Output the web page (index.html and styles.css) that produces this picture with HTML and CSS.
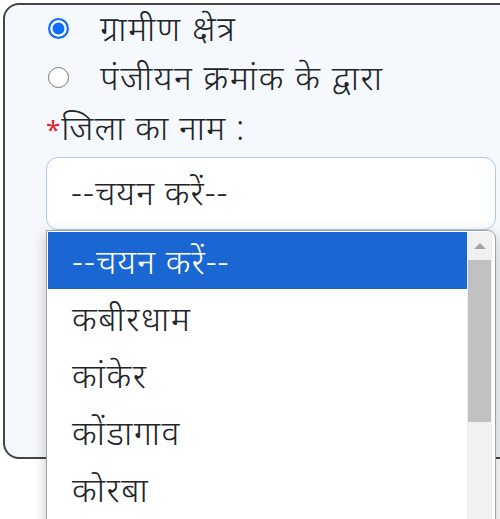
FILE: index.html
```html
<!DOCTYPE html>
<html lang="hi">
<head>
  <meta charset="UTF-8">
  <title>जिला चयन</title>
  <link rel="stylesheet" href="styles.css">
</head>
<body>
  <div class="page">
    <div class="card">
      <label class="radio-row">
        <span class="radio checked"></span>
        <span>ग्रामीण क्षेत्र</span>
      </label>
      <label class="radio-row">
        <span class="radio"></span>
        <span>पंजीयन क्रमांक के द्वारा</span>
      </label>
      <div class="field-label"><span class="req">*</span>जिला का नाम :</div>
      <div class="select-box">--चयन करें--</div>
    </div>

    <div class="dropdown">
      <ul class="options">
        <li class="active">--चयन करें--</li>
        <li>कबीरधाम</li>
        <li>कांकेर</li>
        <li>कोंडागाव</li>
        <li>कोरबा</li>
      </ul>
      <div class="scrollbar">
        <div class="arrow"></div>
        <div class="thumb"></div>
      </div>
    </div>
  </div>
</body>
</html>
```

FILE: styles.css
```css
* {
  box-sizing: border-box;
  margin: 0;
  padding: 0;
}

body {
  background: #fff;
  font-family: "Noto Sans", "Noto Sans Devanagari", sans-serif;
  font-weight: 300;
  color: #212529;
  overflow: hidden;
}

.page {
  position: relative;
  width: 500px;
  height: 519px;
  padding-top: 3px;
  padding-left: 3px;
  overflow: hidden;
}

.card {
  width: 530px;
  height: 456px;
  border: 2px solid #444;
  border-radius: 16px;
  background: #f5f9fe;
  padding-left: 41px;
}

.radio-row,
.field-label,
.select-box,
.options li {
  font-size: 34px;
  letter-spacing: 1.5px;
}

.radio-row {
  display: flex;
  align-items: center;
  gap: 31px;
  height: 48px;
  padding-left: 2px;
}

.radio-row:first-child {
  margin-top: -2px;
  height: 50px;
}

.radio {
  width: 21px;
  height: 21px;
  border-radius: 50%;
  border: 1.5px solid #767676;
  background: #fff;
  flex-shrink: 0;
}

.radio.checked {
  border: 2px solid #0d6efd;
  background: #0d6efd;
  box-shadow: inset 0 0 0 2.5px #fff;
}

.field-label {
  height: 50px;
  display: flex;
  align-items: center;
  padding-top: 2px;
  letter-spacing: 1px;
}

.req {
  color: #e0202e;
  font-size: 26px;
  font-weight: 400;
  align-self: flex-start;
  margin-top: 8px;
}

.select-box {
  margin-top: 6px;
  width: 450px;
  height: 73px;
  border: 1px solid #a8cbf5;
  border-radius: 12px;
  background: #fff;
  display: flex;
  align-items: center;
  padding-left: 24px;
  padding-bottom: 4px;
  letter-spacing: 1px;
}

.dropdown {
  position: absolute;
  top: 230px;
  left: 46px;
  width: 450px;
  height: 300px;
  background: #fff;
  border: 1px solid #a0a0a0;
  border-top-right-radius: 8px;
  box-shadow: 0 4px 14px rgba(0, 0, 0, 0.22);
  display: flex;
  padding: 1px 3px 0 1px;
}

.options {
  list-style: none;
  flex: 1;
}

.options li {
  height: 57px;
  display: flex;
  align-items: center;
  padding-left: 24px;
}

.options li.active {
  background: #1a66d2;
  color: #fff;
  letter-spacing: 1px;
}

.scrollbar {
  width: 25px;
  background: #f1f1f1;
  display: flex;
  flex-direction: column;
}

.arrow {
  height: 28px;
  display: flex;
  justify-content: center;
  align-items: center;
}

.arrow::before {
  content: "";
  border-left: 6px solid transparent;
  border-right: 6px solid transparent;
  border-bottom: 6px solid #a3a3a3;
}

.thumb {
  height: 162px;
  margin: 0 1px;
  background: #c1c1c1;
}
```
